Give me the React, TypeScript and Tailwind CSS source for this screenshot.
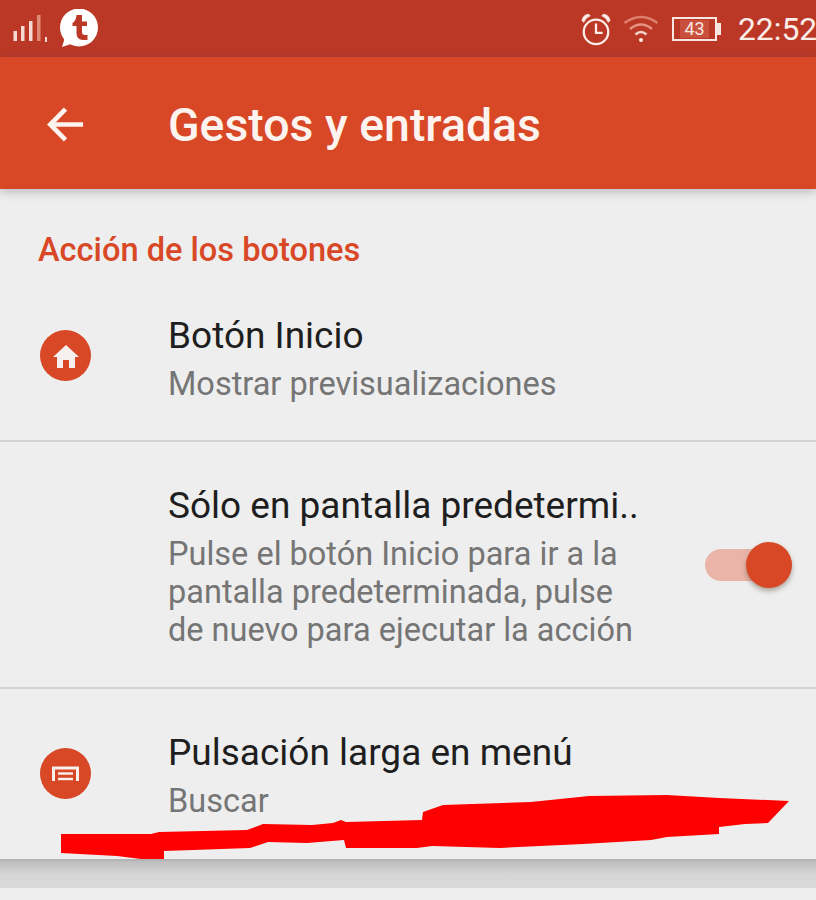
function StatusBar() {
  return (
    <div className="h-[57px] bg-[#bc3826] flex items-center shrink-0 relative">
      {/* Signal */}
      <svg className="ml-[13px] w-[36px] h-[30px] mt-[2px]" viewBox="0 0 36 30">
        <rect x="0.5" y="16" width="3.5" height="10" fill="#f6d9d3" />
        <rect x="8" y="11" width="3.5" height="15" fill="#f6d9d3" />
        <rect x="16" y="6" width="3.5" height="20" fill="#f6d9d3" />
        <rect x="24" y="0" width="3.5" height="26" fill="#e08a78" />
        <rect x="32" y="22" width="2" height="5" fill="#f6d9d3" />
      </svg>
      {/* Tapatalk style bubble */}
      <svg className="ml-[10px] w-[40px] h-[40px]" viewBox="0 0 40 40">
        <circle cx="20" cy="18.5" r="19" fill="#ffffff" />
        <path d="M3 38 L7 25 L15 34 Z" fill="#ffffff" />
        <path d="M17.5 6 H23 V12.5 H28 V17 H23 V23 Q23 26 26 26 H28.5 V31 H24 Q17.5 31 17.5 24 V17 H13.5 V14 Q17 12 17.5 6 Z" fill="#bc3826" />
      </svg>
      <div className="ml-auto flex items-center">
        {/* Alarm */}
        <svg className="w-[32px] h-[34px] mt-[2px]" viewBox="0 0 34 36" fill="none" stroke="#fbeee9">
          <circle cx="17" cy="20" r="13" strokeWidth="2.4" />
          <path d="M17 11 V21 H24" strokeWidth="2.4" />
          <path d="M2 8 Q3 2 9 1 L11 3 Q6 5 4 10 Z" fill="#fbeee9" strokeWidth="0.5" />
          <path d="M32 8 Q31 2 25 1 L23 3 Q28 5 30 10 Z" fill="#fbeee9" strokeWidth="0.5" />
        </svg>
        {/* Wifi */}
        <svg className="ml-[11px] w-[36px] h-[30px]" viewBox="0 0 36 30" fill="none">
          <path d="M1.5 9 Q18 -3 34.5 9" stroke="#de7f6d" strokeWidth="2.6" />
          <path d="M7 15 Q18 6 29 15" stroke="#e59383" strokeWidth="2.6" />
          <path d="M12.5 20.5 Q18 15.5 23.5 20.5" stroke="#f3d2ca" strokeWidth="2.6" />
          <circle cx="18" cy="26" r="2" fill="#fbeee9" />
        </svg>
        {/* Battery */}
        <div className="ml-[13px] w-[45px] h-[24px] border-2 border-[#f8e6e1] flex items-center justify-center mt-[1px]">
          <span className="bg-[#c9503d] px-[4px] text-[18px] leading-[18px] text-[#f8e6e1] font-['Roboto',sans-serif]">43</span>
        </div>
        <div className="w-[4px] h-[12px] bg-[#f8e6e1] mt-[1px]" />
        <span className="ml-[17px] w-[78px] shrink-0 whitespace-nowrap text-[31.8px] leading-[40px] text-[#fbeee9] font-['Roboto',sans-serif]">22:52</span>
      </div>
    </div>
  );
}

function Toolbar() {
  return (
    <div className="h-[132px] bg-[#d84826] flex items-center shrink-0 shadow-[0_2px_10px_rgba(70,70,90,0.35)] relative z-10">
      <svg className="ml-[47px] w-[37px] h-[37px] mt-[2px]" viewBox="0 0 40 38" fill="none" stroke="#fdf3ef" strokeWidth="5">
        <path d="M39 19 H4" />
        <path d="M20 2.5 L3.5 19 L20 35.5" />
      </svg>
      <h1 className="ml-[84px] mt-[5px] text-[46.4px] leading-none font-medium text-[#fdf3ef]">Gestos y entradas</h1>
    </div>
  );
}

function Row({ icon, title, lines, right, className }: { icon?: React.ReactNode; title: string; lines: string[]; right?: React.ReactNode; className: string }) {
  return (
    <div className={`flex items-start relative ${className}`}>
      <div className="w-[168px] shrink-0 pl-[40px]">{icon}</div>
      <div className="flex-1">
        <div className="text-[37px] leading-[40px] mb-[9px] text-[#1e1e1e] whitespace-nowrap">{title}</div>
        {lines.map((line) => (
          <div key={line} className="text-[32.5px] leading-[38px] text-[#757575] whitespace-nowrap">{line}</div>
        ))}
      </div>
      {right}
    </div>
  );
}

export default function App() {
  return (
    <div className="w-[816px] h-[900px] overflow-hidden bg-[#eeeeee] flex flex-col relative font-['Roboto',sans-serif]">
      <StatusBar />
      <Toolbar />

      <h2 className="pl-[38px] pt-[43px] text-[32.6px] leading-[36px] font-medium text-[#d84826]">Acción de los botones</h2>

      <Row
        className="h-[174px] pt-[48px] border-b-2 border-[#d2d2d2]"
        title="Botón Inicio"
        lines={["Mostrar previsualizaciones"]}
        icon={
          <div className="mt-[14px] w-[51px] h-[51px] rounded-full bg-[#d84826] flex items-center justify-center">
            <svg className="w-[28px] h-[28px]" viewBox="0 0 28 28" fill="#f6f1ee">
              <path d="M14 3 L27 15 H23 V26 H17 V18 H11 V26 H5 V15 H1 Z" />
            </svg>
          </div>
        }
      />

      <Row
        className="h-[247px] pt-[44px] border-b-2 border-[#d2d2d2]"
        title="Sólo en pantalla predetermi.."
        lines={["Pulse el botón Inicio para ir a la", "pantalla predeterminada, pulse", "de nuevo para ejecutar la acción"]}
        right={
          <div className="absolute right-[24px] top-[100px] w-[87px] h-[46px] flex items-center">
            <div className="w-[65px] h-[32px] rounded-full bg-[#eab5a8]" />
            <div className="absolute right-0 top-0 w-[46px] h-[46px] rounded-full bg-[#d84826] shadow-[0_3px_5px_rgba(90,70,50,0.45)]" />
          </div>
        }
      />

      <Row
        className="h-[172px] pt-[44px] border-b-2 border-[#b4b4b4]"
        title="Pulsación larga en menú"
        lines={["Buscar"]}
        icon={
          <div className="mt-[15px] w-[51px] h-[51px] rounded-full bg-[#d84826] flex items-center justify-center">
            <svg className="w-[27px] h-[16px]" viewBox="0 0 27 16" fill="none" stroke="#f6f1ee">
              <path d="M1.5 15 V2 H25.5 V15" strokeWidth="3" />
              <path d="M6 7.5 H21" strokeWidth="2.4" />
              <path d="M6 13 H21" strokeWidth="2.4" />
            </svg>
          </div>
        }
      />

      {/* Card gap below the list */}
      <div className="h-[27px] bg-gradient-to-b from-[#bdbdbd] via-[#d6d6d6] to-[#d9d9d9]" />

      {/* Red scribble painted over the screenshot */}
      <svg className="absolute left-0 top-0 w-[816px] h-[900px] pointer-events-none" viewBox="0 0 816 900">
        <path
          fill="#fe0000"
          d="M61 834 L151 834 L159 832 L247 830 L263 824 L312 825 L333 823 L341 820 L346 822 L422 820 L423 812 L443 805 L531 802 L589 796 L667 795 L719 798 L789 801 L768 823 L745 824 L719 827 L719 834 L667 837 L651 840 L583 844 L500 848 L432 846 L417 848 L346 848 L344 840 L307 843 L268 842 L250 848 L193 850 L164 851 L164 859 L141 859 L117 856 L61 853 Z"
        />
      </svg>
    </div>
  );
}
